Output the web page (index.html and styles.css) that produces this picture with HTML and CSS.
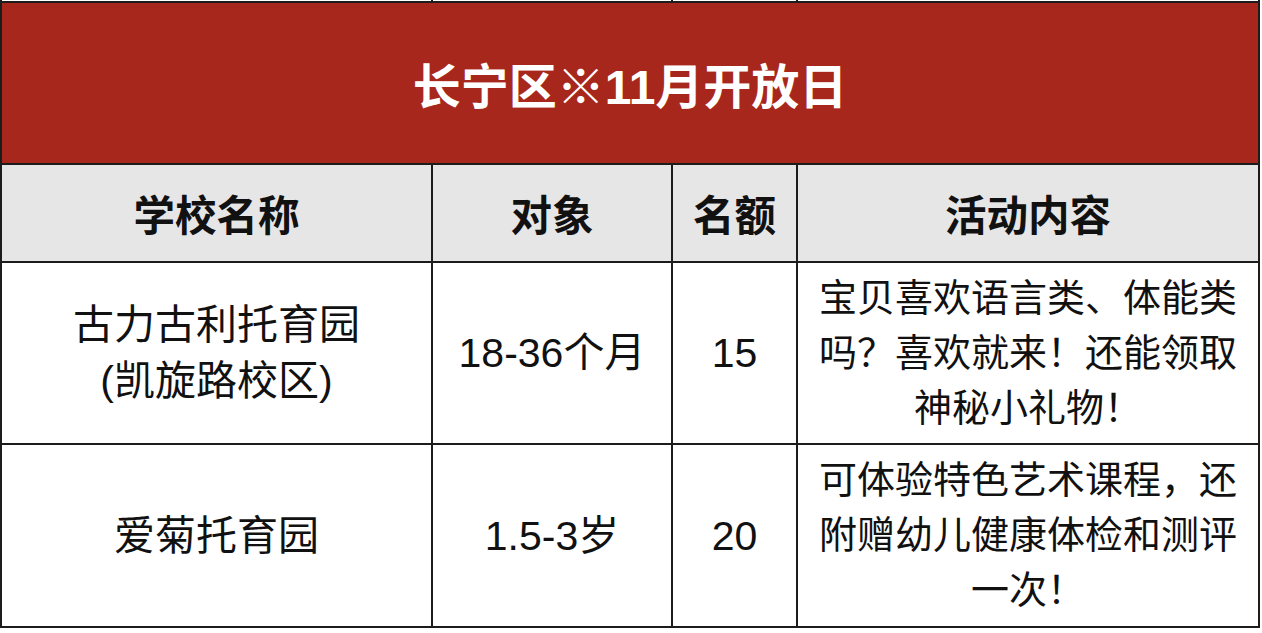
FILE: index.html
```html
<!DOCTYPE html>
<html lang="zh-CN">
<head>
<meta charset="utf-8">
<title>长宁区※11月开放日</title>
<link rel="stylesheet" href="styles.css">
</head>
<body>
<table class="sheet">
  <colgroup>
    <col class="c-name">
    <col class="c-target">
    <col class="c-quota">
    <col class="c-content">
  </colgroup>
  <tr class="stub"><td></td><td></td><td></td><td></td></tr>
  <tr class="title-row"><td colspan="4" class="title">长宁区※11月开放日</td></tr>
  <tr class="head-row">
    <th>学校名称</th>
    <th>对象</th>
    <th>名额</th>
    <th>活动内容</th>
  </tr>
  <tr class="row row-1">
    <td>古力古利托育园<br>(凯旋路校区)</td>
    <td>18-36个月</td>
    <td>15</td>
    <td class="content">宝贝喜欢语言类、体能类<br>吗？喜欢就来！还能领取<br>神秘小礼物！</td>
  </tr>
  <tr class="row row-2">
    <td>爱菊托育园</td>
    <td>1.5-3岁</td>
    <td>20</td>
    <td class="content">可体验特色艺术课程，还<br>附赠幼儿健康体检和测评<br>一次！</td>
  </tr>
</table>
</body>
</html>
```

FILE: styles.css
```css
html, body {
  margin: 0;
  padding: 0;
  background: #ffffff;
}

body {
  font-family: "Liberation Sans", "Noto Sans CJK SC", sans-serif;
  color: #111111;
}

.sheet {
  border-collapse: collapse;
  table-layout: fixed;
  width: 1258px;
  margin-top: 0;
}

.c-name { width: 431px; }
.c-target { width: 240px; }
.c-quota { width: 125px; }
.c-content { width: 462px; }

.sheet td,
.sheet th {
  border: 2px solid #1c1c1c;
  padding: 0;
  text-align: center;
  vertical-align: middle;
}

.stub td {
  height: 1px;
  border-top: none;
  font-size: 0;
  line-height: 0;
  background: #ffffff;
}

.title-row td {
  height: 160px;
}

.title {
  background: #a8271c;
  color: #ffffff;
  font-size: 48px;
  font-weight: 700;
  letter-spacing: 0;
}

.head-row th {
  height: 96px;
  background: #e6e6e6;
  font-size: 41.5px;
  font-weight: 700;
  color: #111111;
}

.row td {
  font-size: 41px;
  line-height: 56px;
  font-weight: 400;
  color: #111111;
}

.row td.content {
  font-size: 38px;
  line-height: 55px;
}

.row-1 td { height: 180px; }
.row-2 td { height: 181px; }
```
